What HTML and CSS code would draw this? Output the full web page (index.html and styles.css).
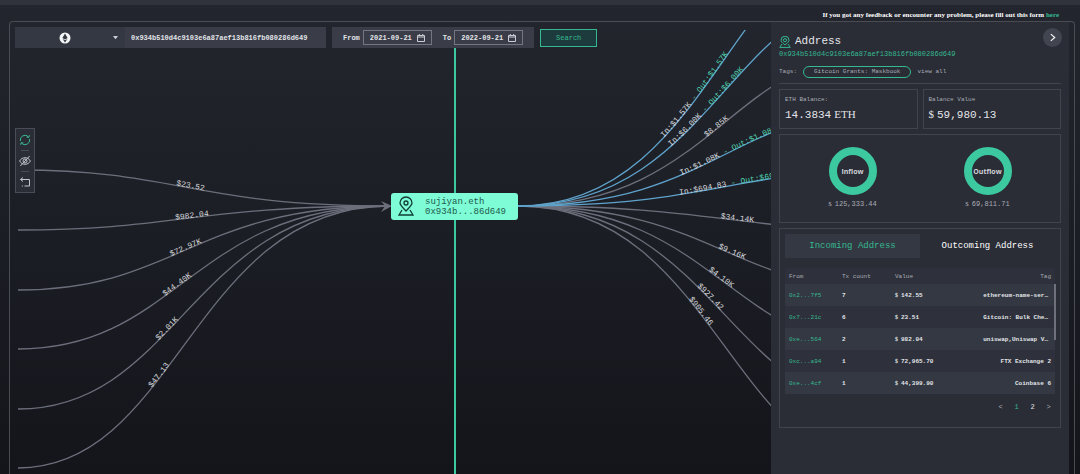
FILE: index.html
```html
<!DOCTYPE html>
<html lang="en">
<head>
  <meta charset="UTF-8">
  <title>Address Graph</title>
  <link rel="stylesheet" href="styles.css">
</head>
<body>

  <div class="topbar"></div>
  <p class="feedback">If you got any feedback or encounter any problem, please fill out this form <a href="#">here</a></p>

  <main class="frame">
    <section class="graph">
      <!-- Flow graph -->
      <svg class="canvas" role="img" aria-label="Transfers of sujiyan.eth">
        <line class="axis" x1="437" y1="0" x2="437" y2="2000"/>

        <g class="edges">
          <path id="in1" d="M0,140 C160,140 175,176 372,176"/>
          <path id="in2" d="M0,200 C160,200 175,176 372,176"/>
          <path id="in3" d="M0,260 C160,260 175,176 372,176"/>
          <path id="in4" d="M0,319 C160,319 175,176 372,176"/>
          <path id="in5" d="M0,379 C160,379 175,176 372,176"/>
          <path id="in6" d="M0,438 C160,438 175,176 372,176"/>
          <path id="out3" d="M500,176 C697,176 712,20 872,20"/>
          <path id="out6" d="M500,176 C697,176 712,200 872,200"/>
          <path id="out7" d="M500,176 C697,176 712,260 872,260"/>
          <path id="out8" d="M500,176 C697,176 712,319 872,319"/>
          <path id="out9" d="M500,176 C697,176 712,379 872,379"/>
          <path id="out10" d="M500,176 C697,176 712,438 872,438"/>
        </g>
        <g class="edges both">
          <path id="out1" d="M500,176 C697,176 712,-99 872,-99"/>
          <path id="out2" d="M500,176 C697,176 712,-39 872,-39"/>
          <path id="out4" d="M500,176 C697,176 712,80 872,80"/>
          <path id="out5" d="M500,176 C697,176 712,140 872,140"/>
        </g>
        <path class="arrow" d="M363,171 L374,176 L363,182 L367,176 Z"/>

        <g class="labels">
          <text><textPath href="#in1" startOffset="159">$23.52</textPath></text>
          <text><textPath href="#in2" startOffset="158">$982.04</textPath></text>
          <text><textPath href="#in3" startOffset="158">$72.97K</textPath></text>
          <text><textPath href="#in4" startOffset="159">$44.40K</textPath></text>
          <text><textPath href="#in5" startOffset="161">$2.01K</textPath></text>
          <text><textPath href="#in6" startOffset="162">$47.13</textPath></text>
          <text><textPath href="#out1" startOffset="166">In:$1.57K <tspan class="out">- Out:$1.57K</tspan></textPath></text>
          <text><textPath href="#out2" startOffset="168">In:$6.00K <tspan class="out">- Out:$6.00K</tspan></textPath></text>
          <text><textPath href="#out3" startOffset="205">$8.85K</textPath></text>
          <text><textPath href="#out4" startOffset="167">In:$1.08K <tspan class="out">- Out:$1.08K</tspan></textPath></text>
          <text><textPath href="#out5" startOffset="162">In:$694.83 <tspan class="out">- Out:$694.83</tspan></textPath></text>
          <text><textPath href="#out6" startOffset="203">$34.14K</textPath></text>
          <text><textPath href="#out7" startOffset="206">$9.16K</textPath></text>
          <text><textPath href="#out8" startOffset="205">$4.10K</textPath></text>
          <text><textPath href="#out9" startOffset="202">$927.42</textPath></text>
          <text><textPath href="#out10" startOffset="202">$905.46</textPath></text>
        </g>

        <g class="node">
          <rect x="373" y="163" width="127" height="27" rx="3"/>
          <g class="node-icon">
            <path d="M388,181 C384,177 382,175 382,173 A6,6 0 0 1 394,173 C394,175 392,177 388,181 Z"/>
            <circle cx="388" cy="173" r="2"/>
            <path d="M384,180 L381,185 H395 L392,180"/>
          </g>
          <text x="407" y="174">sujiyan.eth</text>
          <text x="407" y="184">0x934b...86d649</text>
        </g>
      </svg>

      <form class="search">
        <div class="target">
          <div class="chain">
            <select aria-label="Chain"><option value="eth"></option></select>
            <svg class="eth" viewBox="0 0 12 12"><circle cx="6" cy="6" r="5.5" fill="#f4f5f7"/><path d="M6 1.5 8.6 6 6 7.6 3.4 6ZM3.6 6.9 6 8.3 8.4 6.9 6 10.4Z" fill="#343842"/></svg>
            <svg class="caret" viewBox="0 0 6 4"><path d="M0 0H6L3 4Z" fill="#c9ccd3"/></svg>
          </div>
          <input class="address" type="text" aria-label="Address" value="0x934b510d4c9103e6a87aef13b816fb080286d649">
        </div>
        <div class="dates">
          <label for="from">From</label>
          <span class="date">
            <input type="text" id="from" value="2021-09-21">
            <svg viewBox="0 0 8 8"><path d="M.5 1.5H7.5V7.5H.5ZM.5 3H7.5M2.3 0V2M5.7 0V2"/></svg>
          </span>
          <label for="to">To</label>
          <span class="date">
            <input type="text" id="to" value="2022-09-21">
            <svg viewBox="0 0 8 8"><path d="M.5 1.5H7.5V7.5H.5ZM.5 3H7.5M2.3 0V2M5.7 0V2"/></svg>
          </span>
        </div>
        <button class="submit" type="submit">Search</button>
      </form>

      <div class="tools">
        <button type="button" aria-label="Refresh" class="active">
          <svg viewBox="0 0 12 12"><path d="M1.4 7A4.7 4.7 0 0 1 9.6 3M10.6 5A4.7 4.7 0 0 1 2.4 9M10.4 1.2 9.8 3.4 7.6 3M1.6 10.8 2.2 8.6 4.4 9"/></svg>
        </button>
        <button type="button" aria-label="Hide small transfers">
          <svg viewBox="0 0 12 12"><path d="M.6 6C3 1.6 9 1.6 11.4 6 9 10.4 3 10.4.6 6ZM10.6 1 1.4 11"/><circle cx="6" cy="6" r="2"/></svg>
        </button>
        <button type="button" aria-label="Undo">
          <svg viewBox="0 0 12 12"><path d="M4 1.5 1.5 3.5 4 5.5M1.5 3.5H10.5V10H5.5M3.8 10H2.8"/></svg>
        </button>
      </div>
    </section>

    <aside class="panel">
      <button class="collapse" type="button" aria-label="Collapse"><svg viewBox="0 0 8 8"><path d="M2.5 1 6 4 2.5 7"/></svg></button>

      <h1>
        <svg viewBox="0 0 12 12"><path d="M6 9C3 6.5 2 5.5 2 4.2A4 4 0 0 1 10 4.2C10 5.5 9 6.5 6 9ZM3 8 .8 11.4H11.2L9 8"/><circle cx="6" cy="4.2" r="1.6"/></svg>
        Address
      </h1>
      <a class="hash" href="#">0x934b510d4c9103e6a87aef13b816fb080286d649</a>
      <div class="tags">
        <span>Tags:</span>
        <span class="tag">Gitcoin Grants: Maskbook</span>
        <a href="#">view all</a>
      </div>

      <div class="balances">
        <div class="box balance">
          <h2>ETH Balance:</h2>
          <p>14.3834<span class="unit after">ETH</span></p>
        </div>
        <div class="box balance">
          <h2>Balance Value</h2>
          <p><span class="unit">$</span>59,980.13</p>
        </div>
      </div>

      <div class="box flows">
        <div class="flow">
          <div class="ring">Inflow</div>
          <p><span class="unit">$</span>125,333.44</p>
        </div>
        <div class="flow">
          <div class="ring">Outflow</div>
          <p><span class="unit">$</span>69,811.71</p>
        </div>
      </div>

      <div class="box list">
        <div class="tabs">
          <button type="button" class="active">Incoming Address</button>
          <button type="button">Outcoming Address</button>
        </div>
        <div class="rows">
          <table>
            <thead>
              <tr><th class="from">From</th><th class="count">Tx count</th><th class="value">Value</th><th class="name">Tag</th></tr>
            </thead>
            <tbody>
              <tr><td><a href="#">0x2...7f5</a></td><td>7</td><td><span class="unit">$</span>142.55</td><td class="name cut">ethereum-name-ser…</td></tr>
              <tr><td><a href="#">0x7...21c</a></td><td>6</td><td><span class="unit">$</span>23.51</td><td class="name cut">Gitcoin: Bulk Che…</td></tr>
              <tr><td><a href="#">0xe...564</a></td><td>2</td><td><span class="unit">$</span>982.04</td><td class="name cut">uniswap,Uniswap V…</td></tr>
              <tr><td><a href="#">0xc...a94</a></td><td>1</td><td><span class="unit">$</span>72,965.70</td><td class="name">FTX Exchange 2</td></tr>
              <tr><td><a href="#">0xe...4cf</a></td><td>1</td><td><span class="unit">$</span>44,399.90</td><td class="name">Coinbase 6</td></tr>
            </tbody>
          </table>
          <div class="scroll"></div>
        </div>
        <nav class="pages">
          <button type="button" class="step">&lt;</button>
          <button type="button" class="active">1</button>
          <button type="button">2</button>
          <button type="button" class="step">&gt;</button>
        </nav>
      </div>
    </aside>
  </main>

</body>
</html>
```
FILE: styles.css
```css
:root {
  --green: #36b890;
  --ring: #3cc99f;
  --panel: #2a2c36;
  --field: #3a3d48;
  --row: #333843;
  --line: #41444e;
  --text: #e2e4e8;
  --muted: #a9acb5;
  --mono: "Liberation Mono", "Courier New", monospace;
  --serif: "Liberation Serif", "Times New Roman", serif;
}
*, *::before, *::after {
  box-sizing: border-box;
  margin: 0;
  padding: 0;
}
body {
  display: flex;
  flex-direction: column;
  height: 100vh;
  overflow: hidden;
  background: linear-gradient(#23262e, #14151b);
  color: var(--text);
  font-family: var(--mono);
  font-size: 7px;
}
button, input, select {
  font: inherit;
  color: inherit;
  background: none;
  border: none;
  border-radius: 0;
  outline: none;
}
button {
  cursor: pointer;
}
a {
  color: inherit;
  text-decoration: none;
}
svg {
  display: block;
  fill: none;
}
.topbar {
  flex: none;
  height: 5px;
  background: #30333c;
}
.feedback {
  flex: none;
  height: 16px;
  padding: 4px 21px 0 0;
  text-align: right;
  font: bold 7px/12px var(--serif);
  color: #fff;
}
.feedback a {
  color: var(--green);
}
.frame {
  flex: 1;
  display: flex;
  min-height: 0;
  margin: 0 5px 0 9px;
  padding-right: 5px;
  border: 1px solid #4a4c53;
  border-bottom: none;
  border-radius: 4px 4px 0 0;
}

/* graph */
.graph {
  flex: 1;
  position: relative;
  min-width: 0;
  padding: 5px;
  overflow: hidden;
}
.canvas {
  position: absolute;
  top: 8px;
  left: 8px;
  width: calc(100% - 8px);
  height: calc(100% - 8px);
}
.axis {
  stroke: var(--ring);
  stroke-width: 2;
}
.edges {
  stroke: #6c6f7b;
  stroke-width: 1.3;
}
.edges.both {
  stroke: #5fa3cc;
}
.arrow {
  fill: #6c6f7b;
}
.labels {
  font-size: 8px;
  fill: #d6d8dc;
}
.labels .out {
  fill: #4fd0ab;
}
.node {
  font-size: 9px;
}
.node rect {
  fill: #7dfcd6;
}
.node text {
  fill: #1d5a4b;
}
.node-icon {
  stroke: #123d35;
  stroke-width: 1.3;
}

/* search bar */
.search {
  position: relative;
  display: flex;
  align-items: center;
  gap: 6px;
}
.target, .dates {
  display: flex;
  align-items: center;
  height: 21px;
  background: var(--field);
  font-weight: bold;
}
.chain {
  position: relative;
  width: 110px;
  height: 100%;
  background: #343842;
}
.chain select {
  width: 100%;
  height: 100%;
  appearance: none;
}
.eth, .caret {
  position: absolute;
  pointer-events: none;
}
.eth {
  top: 5px;
  left: 44px;
  width: 12px;
}
.caret {
  top: 9px;
  right: 7px;
  width: 5px;
}
.address {
  width: 201px;
  height: 100%;
  padding: 0 6px;
}
.dates {
  gap: 3px;
  padding: 0 11px;
}
.date {
  display: flex;
  align-items: center;
  width: 69px;
  height: 15px;
  padding: 0 6px;
  border: 1px solid #747781;
}
.date + label {
  margin-left: 8px;
}
.date input {
  flex: 1;
  min-width: 0;
}
.date svg {
  width: 8px;
  stroke: #c9ccd3;
}
.submit {
  width: 57px;
  height: 18px;
  border: 1px solid var(--green);
  background: #1d3b3c;
  color: var(--green);
}

/* toolbox */
.tools {
  position: absolute;
  top: 106px;
  left: 5px;
  width: 20px;
  border: 1px solid #4a4d58;
  background: #2a2c36;
}
.tools button {
  display: flex;
  align-items: center;
  justify-content: center;
  position: relative;
  width: 100%;
  height: 21px;
  color: #c3c5cc;
}
.tools button + button::before {
  content: "";
  position: absolute;
  top: 0;
  left: 5px;
  width: 8px;
  border-top: 1px solid #4a4d58;
}
.tools .active {
  color: var(--green);
}
.tools svg {
  width: 12px;
  stroke: currentColor;
}

/* side panel */
.panel {
  flex: none;
  position: relative;
  width: 298px;
  padding: 13px 8px 0;
  background: var(--panel);
}
.collapse {
  position: absolute;
  top: 6px;
  right: 7px;
  width: 19px;
  height: 19px;
  padding: 5px;
  border-radius: 50%;
  background: #414550;
}
.collapse svg {
  stroke: #fff;
}
.panel h1 {
  display: flex;
  align-items: center;
  gap: 4px;
  font-size: 11px;
  line-height: 13px;
  font-weight: normal;
}
.panel h1 svg {
  width: 12px;
  stroke: var(--green);
}
.hash {
  display: block;
  line-height: 12px;
  color: var(--green);
}
.tags {
  display: flex;
  align-items: center;
  gap: 6px;
  height: 24px;
  font-size: 6px;
  color: var(--muted);
  border-bottom: 1px solid var(--line);
}
.tag {
  padding: 0 10px;
  border: 1px solid var(--green);
  border-radius: 6px;
  line-height: 10px;
}
.box {
  margin-top: 5px;
  border: 1px solid var(--line);
}
.unit {
  margin-right: 3px;
  font-family: var(--serif);
}
.unit.after {
  margin: 0 0 0 3px;
}
.balances {
  display: flex;
  gap: 5px;
}
.balance {
  flex: 1;
  height: 40px;
  padding: 6px 5px;
}
.balance h2 {
  font-size: 6px;
  line-height: 8px;
  font-weight: normal;
  color: var(--muted);
}
.balance p {
  margin-top: 4px;
  font-size: 11px;
  line-height: 12px;
}
.flows {
  display: flex;
  height: 89px;
  padding: 12px 5px;
}
.flow {
  flex: 1;
  display: flex;
  flex-direction: column;
  align-items: center;
  color: var(--muted);
}
.ring {
  display: flex;
  align-items: center;
  justify-content: center;
  width: 48px;
  height: 48px;
  border: 8px solid var(--ring);
  border-radius: 50%;
  font: bold 7px "Open Sans", sans-serif;
  color: #cfd1d8;
}
.flow p {
  margin-top: 3px;
  line-height: 12px;
}

/* address list */
.list {
  height: 200px;
  padding: 5px;
}
.tabs {
  display: flex;
}
.tabs button {
  flex: 1;
  height: 24px;
  font-size: 9px;
}
.tabs .active {
  background: var(--row);
  color: var(--green);
}
.tabs button:not(.active) {
  color: #fff;
}
.rows {
  position: relative;
  margin-top: 10px;
}
table {
  width: 100%;
  border-collapse: collapse;
  table-layout: fixed;
  font-size: 6px;
}
th, td {
  padding: 0 4px;
  text-align: left;
  white-space: nowrap;
}
th {
  height: 16px;
  font-weight: normal;
  color: var(--muted);
}
td {
  height: 22px;
  font-weight: bold;
}
tbody tr:nth-child(odd) {
  background: var(--row);
}
thead, tbody tr:nth-child(even) {
  background: #2e313b;
}
td a {
  color: var(--green);
  font-weight: normal;
}
.from, .count {
  width: 53px;
}
.value {
  width: 60px;
}
.name {
  text-align: right;
}
.cut {
  padding-right: 7px;
}
.scroll {
  position: absolute;
  top: 16px;
  right: -1px;
  width: 2px;
  height: 56px;
  background: #6e717b;
}
.pages {
  display: flex;
  justify-content: flex-end;
  gap: 3px;
  margin-top: 7px;
}
.pages button {
  width: 13px;
  height: 12px;
}
.pages .active {
  color: var(--green);
}
.pages .step {
  color: var(--muted);
}
```
